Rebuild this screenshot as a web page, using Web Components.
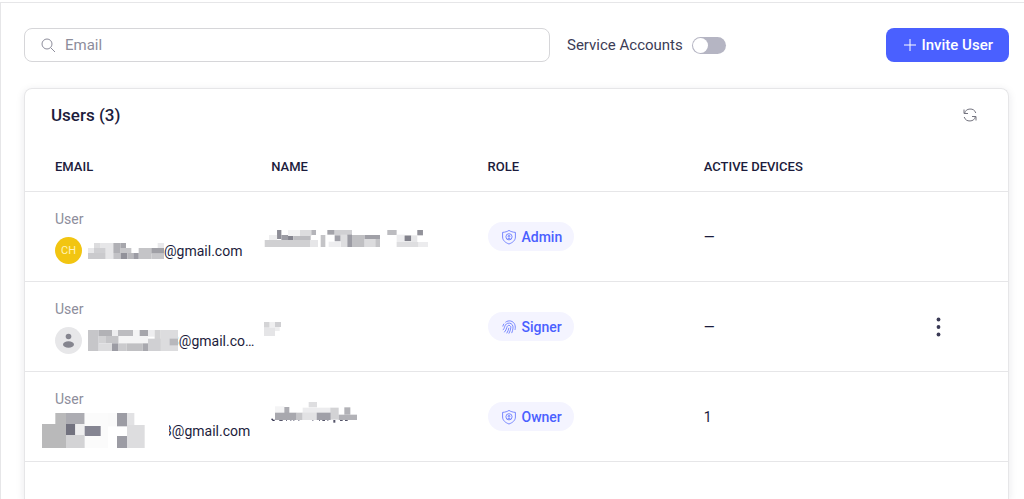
<!DOCTYPE html>
<html lang="en">
<head>
<meta charset="utf-8">
<meta name="viewport" content="width=device-width, initial-scale=1">
<title>Users</title>
<style>
  body {
    margin: 0;
    background: #fff;
    color: #1c1c3c;
    font-family: Roboto, "Liberation Sans", sans-serif;
    font-size: 14px;
    --line: #e6e6e8;
    --accent: #4a60ff;
    --muted: #8d8d9b;
  }
</style>
</head>
<body>
<users-page></users-page>

<script>
const icons = {
  search: `<circle cx="6" cy="6" r="5"/><path d="M9.7 9.7 14 14"/>`,
  plus: `<path d="M7 1v12M1 7h12"/>`,
  refresh: `<path d="M1.5 5.5A5.9 5.9 0 0 1 12.8 5M1 1.5v4h4M12.5 8.5A5.9 5.9 0 0 1 1.2 9M13 12.5v-4H9"/>`,
  shield: `<path d="M7 .4C8.7 1.6 10.9 2.2 13.4 2.4V7c0 3.4-2.7 5.6-6.4 7C3.3 12.6.6 10.4.6 7V2.4C3.1 2.2 5.3 1.6 7 .4Z"/><circle cx="7" cy="6.8" r="3.1"/><circle cx="7" cy="6.3" r=".9"/><path d="M5.3 9.2C6 8.3 8 8.3 8.7 9.2"/>`,
  finger: `<path d="M3.4 2.3C6.8-.4 11.4.9 12.8 4.6c.6 1.6.6 3.4.2 5.3M.8 6.5c.2-1.1.6-2 1.2-2.8M.8 10.1C2 9 2.3 7.9 2.7 6.6 3.3 4.3 5 3 7.3 3.1c2.7.3 4 2.4 3.7 5-.2 1.7-.6 3.4-1.3 5M2.3 12.3C3.6 10.9 4.4 9.2 4.9 7.3c.4-1.5 1.2-2.1 2.3-1.9 1.3.2 1.8 1.2 1.6 2.5-.3 2.1-1 4-2 5.7M4.7 13.3C5.8 11.7 6.5 9.8 6.9 7.8"/>`
};

class UiIcon extends HTMLElement {
  constructor() {
    super();
    this.attachShadow({ mode: "open" });
  }

  connectedCallback() {
    this.shadowRoot.innerHTML = `
      <style>
        :host { display: inline-flex; flex: none; width: 14px; height: 14px; }
        svg { width: 100%; height: 100%; overflow: visible; fill: none; stroke: currentColor; stroke-width: var(--stroke, 1); }
      </style>
      <svg viewBox="0 0 14 14" aria-hidden="true">${icons[this.getAttribute("name")]}</svg>`;
  }
}

/* Blocks are "x y width height grey", on a grid three times finer than a pixel. */
const masks = {
  mail1: {
    size: [228, 48],
    blocks: `18 0 20 15 dcdcde;38 0 38 48 e6e6e8;76 0 22 30 b0b0b5;98 0 16 15 a6a6ac;209 0 19 15 e9e9eb;
      0 15 18 15 e8e8ea;18 15 34 15 cfcfd2;98 15 32 15 c6c6c9;152 15 38 33 c4c4c7;190 15 38 17 a0a0a6;
      0 30 52 18 cacacd;76 30 22 18 c2c2c6;98 30 20 18 92929a;118 30 18 18 b8b8bc;136 30 16 18 9c9ca4;190 32 38 16 c6c6c9`
  },
  mail2: {
    size: [270, 63],
    blocks: `0 0 32 63 c6c6c9;32 0 40 18 b2b2b6;72 0 18 18 ededef;90 0 45 18 bcbcc0;135 0 20 22 f4f4f5;155 0 25 20 a6a6ac;180 0 20 20 ededef;200 0 18 63 d2d2d4;218 0 52 63 dcdcde;
      32 18 22 22 d2d2d4;54 18 38 22 c4c4c7;92 18 88 22 f4f4f5;180 26 38 37 d0d0d3;
      32 40 40 23 dcdcde;72 40 18 23 9c9ca4;90 40 26 23 cacacd;116 40 48 23 c0c0c3;164 40 16 23 a8a8ae;245 26 25 20 b8b8bc`
  },
  mail3: {
    size: [381, 105],
    blocks: `309 30 72 74 fff;0 33 72 72 b9b9ba;40 0 32 33 b9b9ba;72 0 56 33 acacb2;128 0 70 105 fbfbfb;198 0 28 40 fafafa;225 0 30 40 9c9ca4;255 0 22 36 e2e2e4;
      72 33 28 33 72727f;100 33 28 36 eeeeef;128 39 48 30 858592;255 36 53 69 dddddf;
      72 66 56 39 d3d3d5;225 69 30 36 9c9ca4`
  },
  name1: {
    size: [492, 53],
    blocks: `39 0 13 27 8e8e97;72 0 40 18 f2f2f3;108 0 34 18 dcdcde;142 0 14 15 b4b4b9;190 0 22 14 a4a4aa;212 0 52 16 d0d0d3;370 0 28 15 bcbcc0;460 0 17 16 92929a;
      15 15 24 15 eeeeef;52 15 20 15 9c9ca4;72 18 16 15 83838d;88 18 52 15 bcbcc0;170 15 14 38 c4c4c7;212 16 18 18 a0a0a8;230 14 20 39 dedee0;250 14 14 39 9c9ca4;264 15 38 38 c0c0c3;302 15 46 12 a0a0a7;
      398 14 24 22 ededef;422 15 20 20 dcdcde;422 17 20 16 82828c;442 16 18 20 e6e6e8;
      2 30 136 22 d0d0d2;138 30 24 22 e6e6e8;194 35 36 18 ededef;302 27 32 26 dcdcde;334 27 14 26 c4c4c7;398 36 66 17 dedee0;464 36 28 17 ececee`
  },
  name2: {
    size: [51, 42],
    blocks: `0 0 17 17 d4d4d6;17 0 16 17 efeff0;33 0 18 15 cfcfd2;0 17 33 25 e5e5e7;33 15 14 12 eeeeef`
  },
  name3: {
    size: [258, 90],
    blocks: `113 0 25 16 dedee0;12 13 28 19 f4f4f5;40 15 15 18 acacb2;95 17 84 16 ececee;178 17 25 36 d3d3d5;220 16 18 22 b2b2b7;
      12 32 65 22 a8a8ae;77 32 18 22 c6c6c9;95 32 42 22 e2e2e4;137 32 42 22 a0a0a8;203 38 55 16 b2b2b7;
      1 50 5 4 44445c;4 53 7 4 33334f;25 54 10 3 55556a;45 54 3 3 77778a;58 54 3 3 77778a;67 54 3 3 77778a;82 54 3 3 77778a;
      124 54 3 3 77778a;144 54 3 3 77778a;154 54 8 3 55556a;169 54 3 3 77778a;187 54 6 8 55556a;207 54 8 3 55556a;222 54 8 3 55556a`
  }
};

class PixelMask extends HTMLElement {
  constructor() {
    super();
    this.attachShadow({ mode: "open" });
  }

  connectedCallback() {
    const { size: [w, h], blocks } = masks[this.getAttribute("name")];
    const rects = blocks.split(";").map((block) => {
      const [x, y, bw, bh, fill] = block.trim().split(" ");
      return `<rect x="${x}" y="${y}" width="${bw}" height="${bh}" fill="#${fill}"/>`;
    });
    this.shadowRoot.innerHTML = `
      <style>
        :host { display: block; flex: none; }
        svg { display: block; }
      </style>
      <svg width="${w / 3}" height="${h / 3}" viewBox="0 0 ${w} ${h}" aria-hidden="true">${rects.join("")}</svg>`;
  }
}

class SearchField extends HTMLElement {
  constructor() {
    super();
    this.attachShadow({ mode: "open" });
    this.shadowRoot.innerHTML = `
      <style>
        :host { display: block; }
        label {
          display: flex;
          align-items: center;
          gap: 10px;
          height: 34px;
          box-sizing: border-box;
          padding: 0 16px;
          border: 1px solid #d6d6d9;
          border-radius: 8px;
          color: var(--muted);
        }
        input {
          flex: 1;
          min-width: 0;
          padding: 0;
          border: 0;
          outline: 0;
          background: none;
          font: inherit;
          font-size: 15px;
          color: #1c1c3c;
        }
        input::placeholder { color: var(--muted); opacity: 1; }
      </style>
      <label><ui-icon name="search"></ui-icon><input type="search" placeholder="Email" aria-label="Email"></label>`;
  }
}

class ToggleSwitch extends HTMLElement {
  constructor() {
    super();
    this.attachShadow({ mode: "open" });
    this.shadowRoot.innerHTML = `
      <style>
        :host { display: block; }
        label { display: flex; align-items: center; gap: 9px; font-size: 15px; color: #3c3c56; }
        input {
          appearance: none;
          display: flex;
          width: 34px;
          height: 17px;
          margin: 0;
          padding: 1px;
          box-sizing: border-box;
          border-radius: 9px;
          background: #b5b5c3;
        }
        input::before { content: ""; width: 15px; height: 15px; border-radius: 50%; background: #fff; }
        input:checked { justify-content: flex-end; background: var(--accent); }
      </style>
      <label><slot></slot><input type="checkbox" role="switch"></label>`;
  }
}

class PrimaryButton extends HTMLElement {
  constructor() {
    super();
    this.attachShadow({ mode: "open" });
    this.shadowRoot.innerHTML = `
      <style>
        :host { display: block; }
        button {
          display: flex;
          align-items: center;
          gap: 5px;
          height: 34px;
          padding: 0 16px 0 17px;
          border: 0;
          border-radius: 8px;
          background: var(--accent);
          color: #fff;
          font: inherit;
          font-size: 15px;
          font-weight: 500;
          white-space: nowrap;
        }
      </style>
      <button type="button"><ui-icon name="plus"></ui-icon><slot></slot></button>`;
  }
}

class UserAvatar extends HTMLElement {
  constructor() {
    super();
    this.attachShadow({ mode: "open" });
    this.shadowRoot.innerHTML = `
      <style>
        :host {
          display: flex;
          flex: none;
          align-items: center;
          justify-content: center;
          width: 27px;
          height: 27px;
          border-radius: 50%;
          background: #e7e7e9;
          color: #fff3b8;
          font-size: 11px;
        }
        :host([color="yellow"]) { background: #f2c511; }
        svg { width: 27px; height: 27px; fill: #85858f; }
      </style>
      <slot><svg viewBox="0 0 27 27" aria-hidden="true"><circle cx="13.5" cy="9.5" r="2.8"/><ellipse cx="13.5" cy="17.5" rx="5.5" ry="3.3"/></svg></slot>`;
  }
}

class UserCell extends HTMLElement {
  constructor() {
    super();
    this.attachShadow({ mode: "open" });
    this.shadowRoot.innerHTML = `
      <style>
        :host { display: block; }
        .kind { font-size: 14px; line-height: 20px; color: var(--muted); }
        .account { display: flex; align-items: center; gap: 6px; height: 28px; margin-top: 8px; }
      </style>
      <div class="kind">User</div>
      <div class="account"><slot></slot></div>`;
  }
}

class RolePill extends HTMLElement {
  constructor() {
    super();
    this.attachShadow({ mode: "open" });
  }

  connectedCallback() {
    this.shadowRoot.innerHTML = `
      <style>
        :host {
          display: inline-flex;
          align-items: center;
          gap: 6px;
          height: 29px;
          padding: 0 12px 0 14px;
          border-radius: 15px;
          background: #f4f4ff;
          color: var(--accent);
          font-weight: 500;
          vertical-align: middle;
        }
        ui-icon { --stroke: .8; opacity: .9; }
      </style>
      <ui-icon name="${this.getAttribute("icon")}"></ui-icon><slot></slot>`;
  }
}

class UsersCard extends HTMLElement {
  constructor() {
    super();
    this.attachShadow({ mode: "open" });
    this.shadowRoot.innerHTML = `
      <style>
        :host {
          display: block;
          border: 1px solid var(--line);
          border-bottom: 0;
          border-radius: 8px 8px 0 0;
          box-shadow: 0 2px 8px rgba(30, 30, 60, .1);
        }
        header {
          display: flex;
          align-items: center;
          justify-content: space-between;
          height: 52px;
          padding: 0 31px 0 26px;
        }
        h2 { margin: 0; font-size: 17px; font-weight: 500; }
        button { display: flex; padding: 0; border: 0; background: none; color: #74747f; }
        table { width: 100%; border-collapse: separate; border-spacing: 0; table-layout: fixed; }
        th, td { padding: 0 0 0 30px; border-bottom: 1px solid var(--line); text-align: left; }
        th { width: 22%; height: 51px; box-sizing: border-box; font-size: 13px; font-weight: 500; }
        th:last-child { width: auto; }
        td { height: 89px; white-space: nowrap; }
        .address { display: flex; align-items: center; }
        .address pixel-mask { position: relative; }
        .over { margin-right: -7px; }
        .covered { position: relative; padding-left: 109px; }
        .covered pixel-mask { position: absolute; left: -13px; top: -10px; }
        .name { margin-left: -7px; padding-top: 4px; }
        .menu { margin-left: 16px; color: #3a3a55; }
        .menu svg { width: 5px; height: 20px; fill: currentColor; }
      </style>
      <header>
        <h2>Users (3)</h2>
        <button type="button" aria-label="Refresh"><ui-icon name="refresh"></ui-icon></button>
      </header>
      <table>
        <thead>
          <tr><th>EMAIL</th><th>NAME</th><th>ROLE</th><th>ACTIVE DEVICES</th><th></th></tr>
        </thead>
        <tbody>
          <tr>
            <td><user-cell>
              <user-avatar color="yellow">CH</user-avatar>
              <div class="address"><pixel-mask name="mail1"></pixel-mask>@gmail.com</div>
            </user-cell></td>
            <td><pixel-mask class="name" name="name1"></pixel-mask></td>
            <td><role-pill icon="shield">Admin</role-pill></td>
            <td>—</td>
            <td></td>
          </tr>
          <tr>
            <td><user-cell>
              <user-avatar></user-avatar>
              <div class="address"><pixel-mask class="over" name="mail2"></pixel-mask>3@gmail.co…</div>
            </user-cell></td>
            <td><pixel-mask class="name" name="name2"></pixel-mask></td>
            <td><role-pill icon="finger">Signer</role-pill></td>
            <td>—</td>
            <td><button class="menu" type="button" aria-label="More actions">
              <svg viewBox="0 0 5 20"><circle cx="2.5" cy="2.5" r="1.9"/><circle cx="2.5" cy="10" r="1.9"/><circle cx="2.5" cy="17.5" r="1.9"/></svg>
            </button></td>
          </tr>
          <tr>
            <td><user-cell>
              <div class="covered">3@gmail.com<pixel-mask name="mail3"></pixel-mask></div>
            </user-cell></td>
            <td><pixel-mask name="name3"></pixel-mask></td>
            <td><role-pill icon="shield">Owner</role-pill></td>
            <td>1</td>
            <td></td>
          </tr>
        </tbody>
      </table>`;
  }
}

class UsersPage extends HTMLElement {
  constructor() {
    super();
    this.attachShadow({ mode: "open" });
    this.shadowRoot.innerHTML = `
      <style>
        :host {
          display: flex;
          flex-direction: column;
          gap: 26px;
          min-height: calc(100vh - 2px);
          box-sizing: border-box;
          margin-top: 2px;
          padding: 25px 15px 0 23px;
          border: solid var(--line);
          border-width: 1px 0 0 1px;
        }
        .toolbar { display: flex; align-items: center; gap: 17px; }
        search-field { width: 53.4%; }
        primary-button { margin-left: auto; }
        users-card { flex: 1; }
      </style>
      <div class="toolbar">
        <search-field></search-field>
        <toggle-switch>Service Accounts</toggle-switch>
        <primary-button>Invite User</primary-button>
      </div>
      <users-card></users-card>`;
  }
}

window.customElements.define("ui-icon", UiIcon);
window.customElements.define("pixel-mask", PixelMask);
window.customElements.define("search-field", SearchField);
window.customElements.define("toggle-switch", ToggleSwitch);
window.customElements.define("primary-button", PrimaryButton);
window.customElements.define("user-avatar", UserAvatar);
window.customElements.define("user-cell", UserCell);
window.customElements.define("role-pill", RolePill);
window.customElements.define("users-card", UsersCard);
window.customElements.define("users-page", UsersPage);
</script>
</body>
</html>
